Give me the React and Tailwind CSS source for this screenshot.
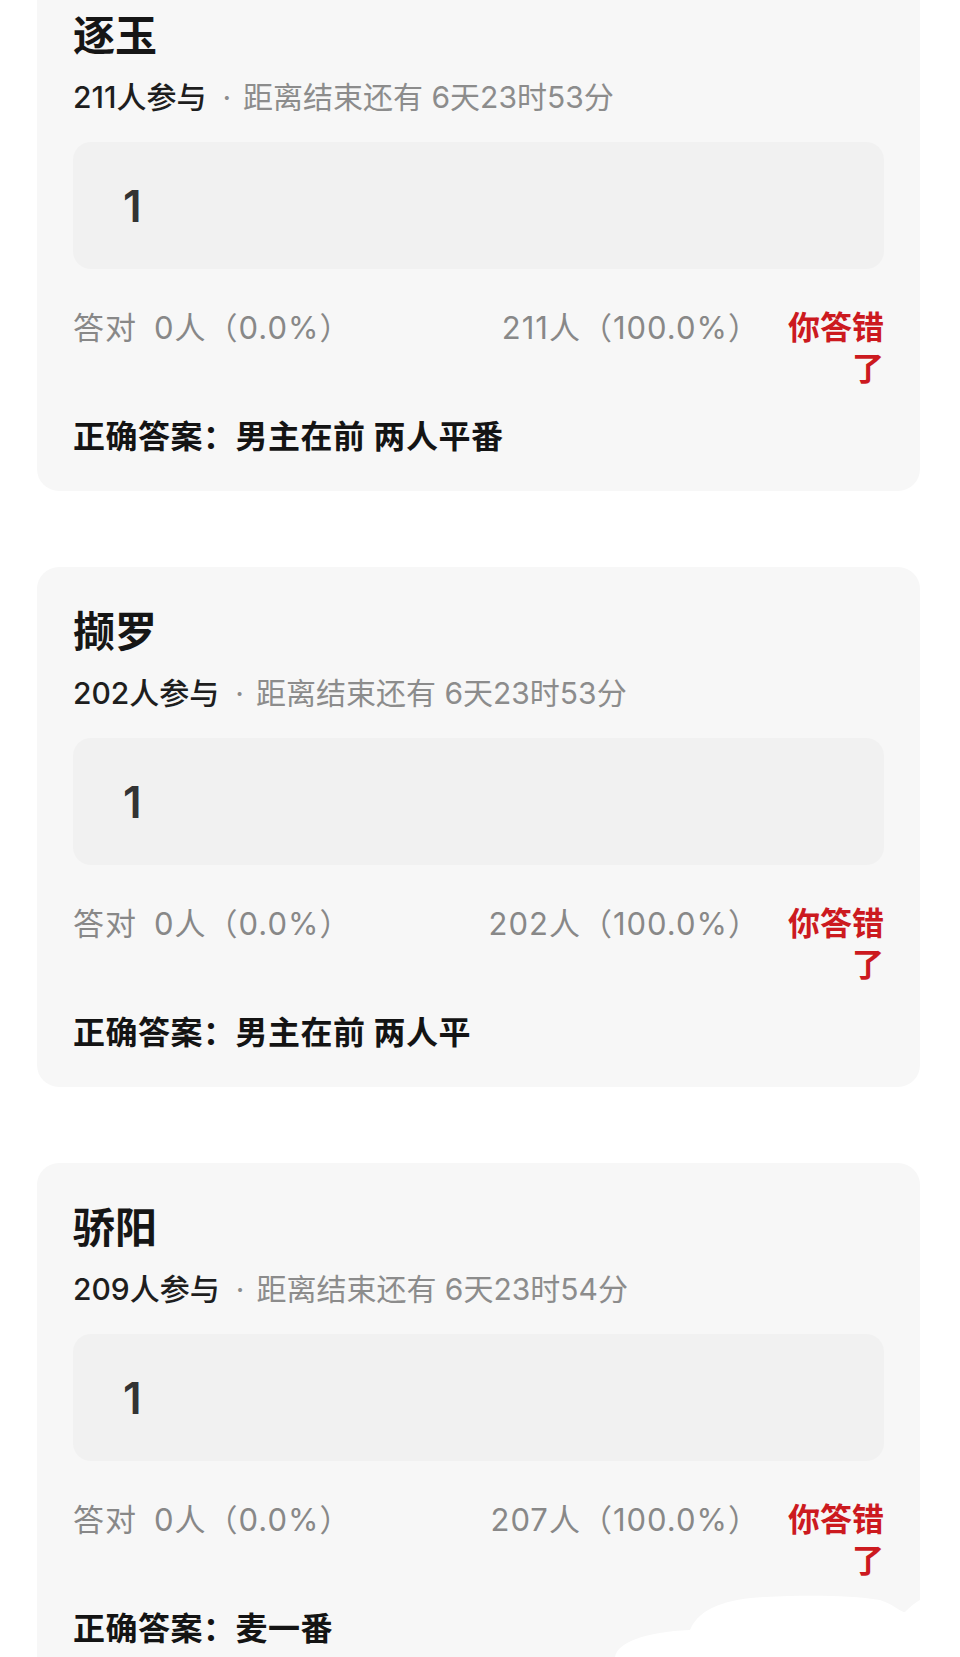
import React from 'react';

const font = { fontFamily: 'Inter, "Noto Sans CJK SC", sans-serif' };

const quizzes = [
  {
    title: '逐玉',
    joined: '211人参与',
    remain: '6天23时53分',
    right: '0人（0.0%）',
    wrong: '211人（100.0%）',
    answer: '男主在前 两人平番'
  },
  {
    title: '撷罗',
    joined: '202人参与',
    remain: '6天23时53分',
    right: '0人（0.0%）',
    wrong: '202人（100.0%）',
    answer: '男主在前 两人平'
  },
  {
    title: '骄阳',
    joined: '209人参与',
    remain: '6天23时54分',
    right: '0人（0.0%）',
    wrong: '207人（100.0%）',
    answer: '麦一番'
  }
];

// one quiz card
const QuizCard = ({ quiz }) => (
  <div className="w-[883px] rounded-[22px] bg-[#f7f7f7] px-[36px] pt-[36px] pb-[32px]">
    <div className="text-[42px] leading-[58px] font-bold text-[#161616]">{quiz.title}</div>
    <div className="mt-[12px] text-[30px] leading-[40px] whitespace-nowrap">
      <span className="font-medium text-[#1e1e1e]">{quiz.joined}</span>
      <span className="ml-[16px] mr-[12px] text-[#8c8c8c]">·</span>
      <span className="text-[#8c8c8c]">距离结束还有 {quiz.remain}</span>
    </div>
    <div className="mt-[25px] h-[127px] rounded-[18px] bg-[#f1f1f1] pl-[50px] flex items-center">
      <span className="text-[44px] font-semibold text-[#333333]">1</span>
    </div>
    <div className="mt-[38px] flex items-start leading-[41px]">
      <div className="flex-1 text-[31px] tracking-[1px] text-[#888888] whitespace-nowrap">
        答对<span className="ml-[17px]">{quiz.right}</span>
      </div>
      <div className="text-[31px] tracking-[1px] text-[#888888] whitespace-nowrap">{quiz.wrong}</div>
      <div className="ml-[26px] w-[98px] text-right text-[32px] font-bold text-[#cc1a1f]">你答错了</div>
    </div>
    <div className="mt-[26px] text-[32px] tracking-[0.5px] leading-[44px] font-bold text-[#141414] whitespace-nowrap">
      正确答案：{quiz.answer}
    </div>
  </div>
);

export default function App() {
  return (
    <div className="relative h-[1657px] overflow-hidden bg-white" style={font}>
      <div className="mt-[-29px] ml-[37px] flex flex-col gap-[76px]">
        {quizzes.map((q) => (
          <QuizCard key={q.title} quiz={q} />
        ))}
      </div>
      {/* white smudge over the bottom right corner */}
      <svg className="absolute left-0 top-0" width="960" height="1657" viewBox="0 0 960 1657">
        <path
          d="M615,1657 C618,1642 645,1632 690,1630 C700,1607 728,1599 765,1597 C805,1595 850,1595 880,1600 C895,1605 900,1612 905,1612 C912,1605 918,1600 925,1598 L960,1598 L960,1657 Z"
          fill="#ffffff"
        />
      </svg>
    </div>
  );
}
